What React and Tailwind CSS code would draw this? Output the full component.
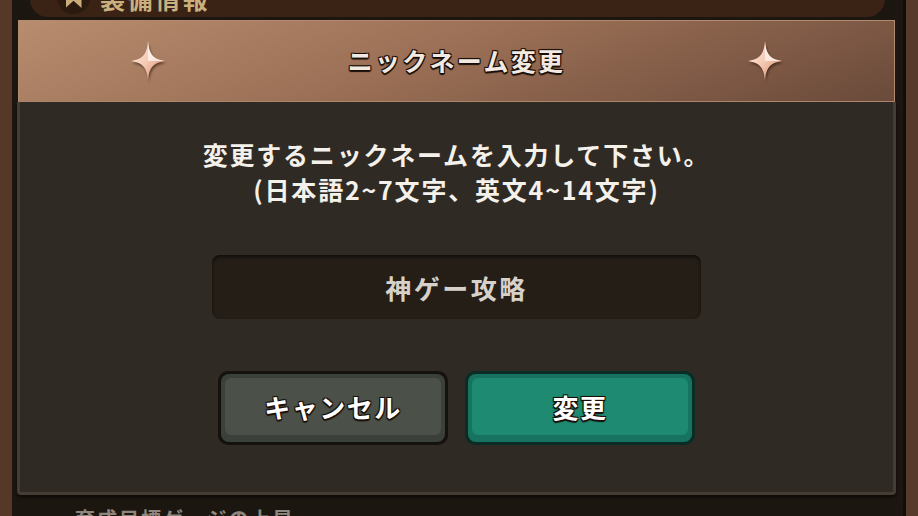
import React from "react";

const jp = { fontFamily: '"Noto Sans CJK JP", "Noto Sans", sans-serif' };

function Sparkle() {
    return (
        <svg width="36" height="42" viewBox="0 0 36 42" className="drop-shadow-[1px_2px_1px_rgba(40,20,10,0.6)]">
            <defs>
                <linearGradient id="spk" x1="0" y1="0" x2="1" y2="1">
                    <stop offset="0" stopColor="#fff4ea" />
                    <stop offset="0.5" stopColor="#f5c8b2" />
                    <stop offset="1" stopColor="#d27e62" />
                </linearGradient>
            </defs>
            <path
                d="M18 1 C19 13 22 19 35 21 C22 23 19 29 18 41 C17 29 14 23 1 21 C14 19 17 13 18 1 Z"
                fill="url(#spk)"
            />
            <path d="M18 1 C19 13 22 19 35 21 L18 21 Z" fill="#fffaf6" opacity="0.7" />
        </svg>
    );
}

const outline =
    "[text-shadow:0_0_2px_#1a0f08,1px_1px_0_#1a0f08,-1px_-1px_0_#1a0f08,1px_-1px_0_#1a0f08,-1px_1px_0_#1a0f08,0_2px_1px_#1a0f08]";

export default function App() {
    return (
        <div style={jp} className="w-[918px] h-[516px] overflow-hidden flex bg-[#1e1813]">
            <div className="w-[12px] shrink-0 bg-[#553828]" />

            <div className="flex-1 flex flex-col bg-[#1c1611] overflow-hidden">
                {/* tab behind the dialog */}
                <div className="h-[20px] shrink-0 px-[18px]">
                    <div className="mt-[-20px] h-[37px] rounded-b-[18px] bg-[#3a2214] flex items-end pb-[3px] pl-[27px] gap-[10px]">
                        <div className="w-[33px] h-[33px] rounded-full bg-[#2a1a10] flex items-end justify-center pb-[6px]">
                            <div className="w-[16px] h-[26px] bg-[#c9ae7c] [clip-path:polygon(0_0,100%_0,100%_100%,50%_72%,0_100%)]" />
                        </div>
                        <span className="text-[25px] leading-none font-bold text-[#c9b07e] tracking-[2.5px] mb-[3px]">装備情報</span>
                    </div>
                </div>

                {/* header */}
                <div className="shrink-0 ml-[6px] mr-[8px] h-[82px] border border-[#b28a70] bg-[linear-gradient(160deg,#b88c6e_0%,#9c7056_45%,#6a4a3a_100%)] flex items-center justify-between px-[111px] shadow-[0_1px_0_#3a2418]">
                    <Sparkle />
                    <span className={`text-[25px] font-bold text-[#f2eae2] tracking-[2.3px] ${outline}`}>ニックネーム変更</span>
                    <Sparkle />
                </div>

                {/* body */}
                <div className="shrink-0 ml-[5px] mr-[7px] h-[393px] rounded-b-[4px] border-x-[3px] border-b-[3px] border-[#453c33] bg-[#302a24] shadow-[0_2px_3px_#0c0906] flex flex-col items-center pt-[35px]">
                    <p className="text-[25px] leading-[35px] font-bold text-[#f4f0ea] text-center tracking-[1.8px]">
                        変更するニックネームを入力して下さい。
                        <br />
                        (日本語2~7文字、英文4~14文字)
                    </p>

                    <div className="mt-[48px] w-[489px] h-[64px] rounded-[8px] bg-[#241e17] shadow-[inset_0_2px_3px_#120e0a] flex items-center justify-center">
                        <span className="text-[26px] font-bold text-[#d6d1c9] tracking-[2.5px]">神ゲー攻略</span>
                    </div>

                    <div className="mt-[52px] flex gap-[17px]">
                        <div className="w-[230px] h-[74px] rounded-[10px] bg-[#15120e] p-[3px]">
                            <div className="h-full rounded-[8px] bg-[#3b403a] p-[4px] pb-[7px]">
                                <div className="h-full rounded-[6px] bg-[#4b5149] flex items-center justify-center">
                                    <span className={`text-[26px] font-bold text-white tracking-[1.5px] ${outline}`}>キャンセル</span>
                                </div>
                            </div>
                        </div>
                        <div className="w-[230px] h-[74px] rounded-[10px] bg-[#0b2c25] p-[3px]">
                            <div className="h-full rounded-[8px] bg-[#187260] p-[4px] pb-[7px]">
                                <div className="h-full rounded-[6px] bg-[#1d8a71] flex items-center justify-center">
                                    <span className={`text-[26px] font-bold text-white tracking-[1.5px] ${outline}`}>変更</span>
                                </div>
                            </div>
                        </div>
                    </div>
                </div>

                {/* content under dialog */}
                <div className="shrink-0 pl-[63px] pt-[10px]">
                    <span className="text-[20px] leading-[28px] font-bold text-[#8e867c] tracking-[2px]">育成目標ゲージの上昇</span>
                </div>
            </div>

            <div className="w-[3px] shrink-0 bg-[#120d0a]" />
            <div className="w-[12px] shrink-0 bg-[#573a29]" />
        </div>
    );
}
